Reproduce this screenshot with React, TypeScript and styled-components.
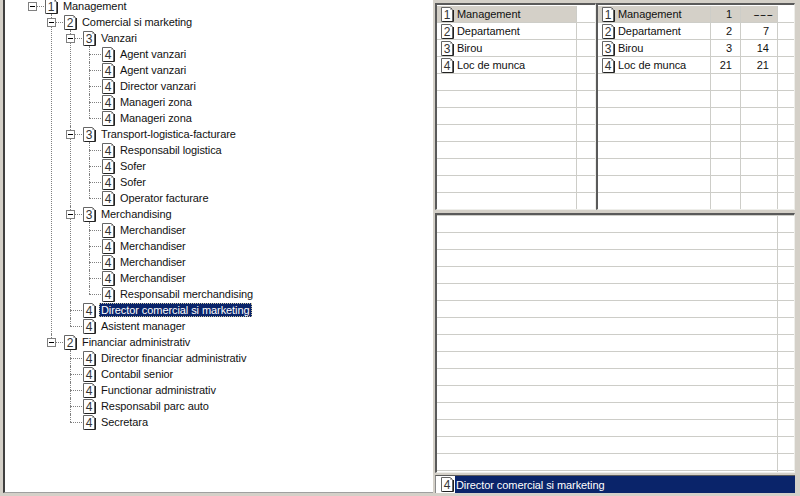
import React, { FC } from 'react'
import styled, { createGlobalStyle } from 'styled-components'

type Node = { level: number; label: string; selected?: boolean; children?: Node[] }

const leaf = (label: string, selected = false): Node => ({ level: 4, label, selected })

const tree: Node = {
  level: 1,
  label: 'Management',
  children: [
    {
      level: 2,
      label: 'Comercial si marketing',
      children: [
        {
          level: 3,
          label: 'Vanzari',
          children: ['Agent vanzari', 'Agent vanzari', 'Director vanzari', 'Manageri zona', 'Manageri zona'].map((l) => leaf(l))
        },
        {
          level: 3,
          label: 'Transport-logistica-facturare',
          children: ['Responsabil logistica', 'Sofer', 'Sofer', 'Operator facturare'].map((l) => leaf(l))
        },
        {
          level: 3,
          label: 'Merchandising',
          children: ['Merchandiser', 'Merchandiser', 'Merchandiser', 'Merchandiser', 'Responsabil merchandising'].map((l) => leaf(l))
        },
        leaf('Director comercial si marketing', true),
        leaf('Asistent manager')
      ]
    },
    {
      level: 2,
      label: 'Financiar administrativ',
      children: ['Director financiar administrativ', 'Contabil senior', 'Functionar administrativ', 'Responsabil parc auto', 'Secretara'].map((l) => leaf(l))
    }
  ]
}

const levels = [
  { level: 1, name: 'Management', count: '1', total: '---' },
  { level: 2, name: 'Departament', count: '2', total: '7' },
  { level: 3, name: 'Birou', count: '3', total: '14' },
  { level: 4, name: 'Loc de munca', count: '21', total: '21' }
]

const DocIcon: FC<{ n: number }> = ({ n }) => (
  <Doc width="13" height="15" viewBox="0 0 13 15">
    <path d="M0.5 0.5H9.5L11.5 2.5V14.5H0.5Z" fill="#fff" stroke="#666" />
    <path d="M12.5 3V14.5H1.5" fill="none" stroke="#222" />
    <path d="M9.5 0.5V2.5H11.5" fill="none" stroke="#aaa" />
    <text x="6" y="12" textAnchor="middle" fontSize="12" fontFamily="Liberation Sans, sans-serif" fill="#333">
      {n}
    </text>
  </Doc>
)

const Branch: FC<{ node: Node; root?: boolean }> = ({ node, root }) => (
  <Item $root={root}>
    <Row>
      {node.children && (
        <Expander>
          <Minus />
        </Expander>
      )}
      <DocIcon n={node.level} />
      <Label $selected={node.selected}>{node.label}</Label>
    </Row>
    {node.children && (
      <Children>
        {node.children.map((child, i) => (
          <Branch key={i} node={child} />
        ))}
      </Children>
    )}
  </Item>
)

const LevelGrid: FC<{ columns: string; stats?: boolean; rows: number }> = ({ columns, stats, rows }) => (
  <Grid>
    {Array.from({ length: rows }).map((_, i) => {
      const row = levels[i]
      return (
        <GridRow key={i} $columns={columns} $active={i === 0}>
          <Cell>
            {row && (
              <CellName>
                <DocIcon n={row.level} />
                <span>{row.name}</span>
              </CellName>
            )}
          </Cell>
          {stats && <NumCell>{row?.count}</NumCell>}
          {stats && <NumCell>{row && (row.total === '---' ? <Dashes>---</Dashes> : row.total)}</NumCell>}
          <Cell $plain />
        </GridRow>
      )
    })}
  </Grid>
)

export default function App() {
  return (
    <Window>
      <Global />
      <TreePane>
        <Root>
          <Branch node={tree} root />
        </Root>
      </TreePane>
      <Side>
        <TopRow>
          <Pane>
            <LevelGrid columns="140px 1fr" rows={13} />
          </Pane>
          <Pane $grow>
            <LevelGrid columns="113px 30px 37px 1fr" stats rows={13} />
          </Pane>
        </TopRow>
        <Lower>
          <LowerGrid />
        </Lower>
        <Status>
          <DocIcon n={4} />
          <StatusText>Director comercial si marketing</StatusText>
        </Status>
      </Side>
    </Window>
  )
}

const font_ui = '"Liberation Sans", Arial, sans-serif'
const grid_line = '#cdcdc8'
const text_tracking = '-0.08px'

const Global = createGlobalStyle`
  html, body {
    margin: 0;
    padding: 0;
    background: #d4d0c8;
  }
`

const Window = styled.div`
  width: 800px;
  height: 496px;
  display: flex;
  overflow: hidden;
  background: #d4d0c8;
  font-family: ${font_ui};
  font-size: 11px;
  color: #111;
`

const TreePane = styled.div`
  width: 428px;
  height: 492px;
  margin-left: 3px;
  flex: none;
  overflow: hidden;
  background: #fff;
  border-left: 2px solid #404040;
  border-bottom: 1px solid #a0a0a0;
`

const Root = styled.ul`
  list-style: none;
  margin: -2px 0 0 27px;
  padding: 0;
`

const Children = styled.ul`
  list-style: none;
  margin: 0 0 0 6px;
  padding: 0;
`

const Item = styled.li<{ $root?: boolean }>`
  position: relative;
  padding-left: 13px;

  &::before {
    content: '';
    position: absolute;
    left: 0;
    top: 8px;
    width: 12px;
    border-top: 1px dotted #808080;
  }

  ${(p) =>
    !p.$root &&
    `
    &::after {
      content: '';
      position: absolute;
      left: 0;
      top: 0;
      bottom: 0;
      border-left: 1px dotted #808080;
    }

    &:last-child::after {
      bottom: auto;
      height: 8px;
    }
  `}
`

const Row = styled.div`
  position: relative;
  height: 16px;
  display: flex;
  align-items: center;
  z-index: 1;
`

const Expander = styled.span`
  position: absolute;
  left: -17px;
  top: 4px;
  width: 7px;
  height: 7px;
  border: 1px solid #808080;
  background: #fff;
  display: flex;
  align-items: center;
  justify-content: center;
`

const Minus = styled.span`
  width: 5px;
  height: 1px;
  background: #000;
`

const Doc = styled.svg`
  flex: none;
  display: block;
`

const Label = styled.span<{ $selected?: boolean }>`
  margin-left: 3px;
  padding: 0 2px;
  height: 14px;
  line-height: 14px;
  white-space: nowrap;
  letter-spacing: ${text_tracking};
  background: ${(p) => (p.$selected ? '#0a246a' : 'transparent')};
  color: ${(p) => (p.$selected ? '#fff' : '#111')};
  outline: ${(p) => (p.$selected ? '1px dotted #c9c29f' : 'none')};
  outline-offset: -1px;
`

const Side = styled.div`
  flex: 1;
  min-width: 0;
  padding: 3px 5px 3px 2px;
  display: flex;
  flex-direction: column;
`

const TopRow = styled.div`
  height: 207px;
  flex: none;
  display: flex;
`

const Pane = styled.div<{ $grow?: boolean }>`
  width: 161px;
  flex: ${(p) => (p.$grow ? '1' : 'none')};
  box-sizing: border-box;
  overflow: hidden;
  background: #fff;
  border-top: 2px solid #5a5a5a;
  border-left: 2px solid #5a5a5a;
  border-right: 1px solid #eeeeea;
  border-bottom: 1px solid #eeeeea;
`

const Grid = styled.div`
  display: flex;
  flex-direction: column;
  margin-top: 1px;
`

const GridRow = styled.div<{ $columns: string; $active?: boolean }>`
  display: grid;
  grid-template-columns: ${(p) => p.$columns};
  height: 17px;
  box-sizing: border-box;
  border-bottom: 1px solid ${grid_line};

  & > *:not(:last-child) {
    background: ${(p) => (p.$active ? '#d4d0c8' : 'transparent')};
  }
`

const Cell = styled.div<{ $plain?: boolean }>`
  min-width: 0;
  border-right: ${(p) => (p.$plain ? 'none' : `1px solid ${grid_line}`)};
`

const NumCell = styled(Cell)`
  text-align: right;
  padding-right: 8px;
  line-height: 16px;
`

const Dashes = styled.span`
  display: inline-block;
  transform: scaleX(1.8);
  transform-origin: right center;
  margin-right: -4px;
`

const CellName = styled.div`
  display: flex;
  align-items: center;
  gap: 3px;
  height: 16px;
  padding-left: 4px;
  white-space: nowrap;
  letter-spacing: ${text_tracking};
`

const Lower = styled.div`
  height: 260px;
  flex: none;
  box-sizing: border-box;
  overflow: hidden;
  background: #fff;
  border-top: 2px solid #5a5a5a;
  border-left: 2px solid #5a5a5a;
  border-right: 1px solid #eeeeea;
  border-bottom: 1px solid #eeeeea;
  margin-top: 3px;
`

const LowerGrid = styled.div`
  height: 100%;
  background-image: linear-gradient(to right, transparent 340px, ${grid_line} 340px, ${grid_line} 341px, transparent 341px),
    linear-gradient(to bottom, transparent 16px, ${grid_line} 16px);
  background-size: 100% 100%, 100% 17px;
  background-position: 0 0, 0 1px;
  background-repeat: no-repeat, repeat-y;
`

const Status = styled.div`
  height: 18px;
  flex: none;
  box-sizing: border-box;
  margin-top: 2px;
  padding-left: 5px;
  display: flex;
  align-items: center;
  gap: 1px;
  background: #fff;
  border-top: 1px solid #5a5a5a;
  border-left: 1px solid #8a8a8a;
`

const StatusText = styled.div`
  flex: 1;
  height: 100%;
  line-height: 19px;
  padding-left: 1px;
  background: #0a246a;
  color: #fff;
  white-space: nowrap;
  letter-spacing: ${text_tracking};
`
